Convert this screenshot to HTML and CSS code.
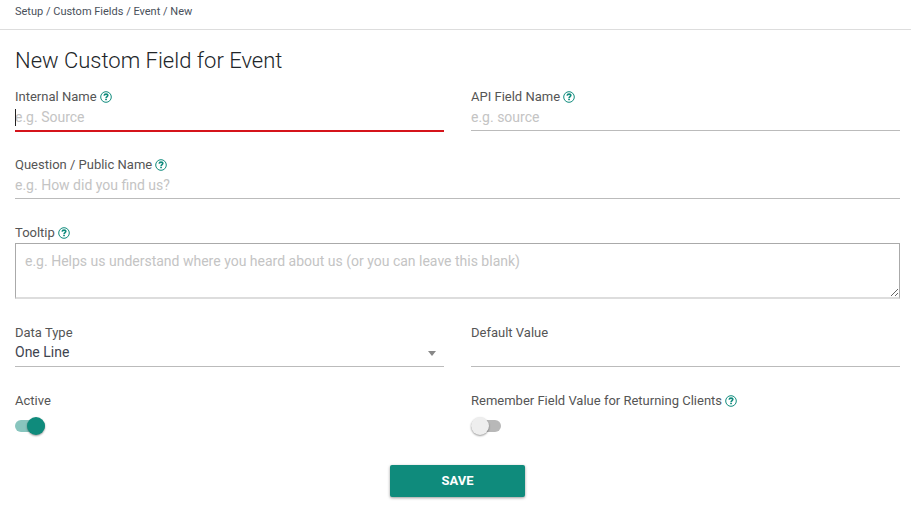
FILE: index.html
```html
<!DOCTYPE html>
<html lang="en">
<head>
  <meta charset="UTF-8">
  <meta name="viewport" content="width=device-width, initial-scale=1.0">
  <title>New Custom Field for Event</title>
  <link rel="stylesheet" href="styles.css">
</head>
<body>
  <!-- Help icon shared by the labels -->
  <svg class="sprite" aria-hidden="true">
    <symbol id="help" viewBox="0 0 12 12">
      <circle cx="6" cy="6" r="5.300" fill="none" stroke="currentColor" stroke-width="1"/>
      <path d="M4.100 4.700C4.300 3.600 5 3.100 6 3.100c1.100 0 1.800.6 1.800 1.500C7.800 5.600 6.100 5.700 6.100 7" fill="none" stroke="currentColor" stroke-width="1.600"/>
      <rect x="5.200" y="7.700" width="1.700" height="1.500" fill="currentColor"/>
    </symbol>
  </svg>

  <nav class="breadcrumb" aria-label="Breadcrumb">
    <a href="#">Setup</a> / <a href="#">Custom Fields</a> / <a href="#">Event</a> / <span>New</span>
  </nav>

  <main class="content">
    <h1>New Custom Field for Event</h1>

    <form class="field-form">
      <div class="field">
        <label for="internalName">Internal Name <svg class="help"><use href="#help"/></svg></label>
        <div class="control focused">
          <input type="text" id="internalName" placeholder="e.g. Source">
        </div>
      </div>
      <div class="field">
        <label for="apiName">API Field Name <svg class="help"><use href="#help"/></svg></label>
        <div class="control">
          <input type="text" id="apiName" placeholder="e.g. source">
        </div>
      </div>

      <div class="field wide">
        <label for="publicName">Question / Public Name <svg class="help"><use href="#help"/></svg></label>
        <div class="control">
          <input type="text" id="publicName" placeholder="e.g. How did you find us?">
        </div>
      </div>

      <div class="field wide">
        <label for="tooltip">Tooltip <svg class="help"><use href="#help"/></svg></label>
        <textarea id="tooltip" placeholder="e.g. Helps us understand where you heard about us (or you can leave this blank)"></textarea>
      </div>

      <div class="field">
        <label for="dataType">Data Type</label>
        <div class="control dropdown">
          <select id="dataType">
            <option>One Line</option>
            <option>Multiple Lines</option>
            <option>Date</option>
          </select>
        </div>
      </div>
      <div class="field">
        <label for="defaultValue">Default Value</label>
        <div class="control">
          <input type="text" id="defaultValue">
        </div>
      </div>

      <div class="field">
        <label for="active">Active</label>
        <input type="checkbox" class="switch" id="active" checked>
      </div>
      <div class="field">
        <label for="remember">Remember Field Value for Returning Clients <svg class="help"><use href="#help"/></svg></label>
        <input type="checkbox" class="switch" id="remember">
      </div>

      <button type="submit" class="save">SAVE</button>
    </form>
  </main>
</body>
</html>
```
FILE: styles.css
```css
* {
  box-sizing: border-box;
}
body {
  margin: 0;
  font-family: Roboto, Arial, sans-serif;
  background: #fff;
  color: #212529;
}
.sprite {
  display: none;
}
.breadcrumb {
  height: 30px;
  padding: 4px 15px;
  border-bottom: 1px solid #ddd;
  font-size: 11px;
  line-height: 16px;
  color: #49505a;
}
.breadcrumb a {
  color: inherit;
  text-decoration: none;
}
.content {
  padding: 16px 11px 15px 15px;
}
h1 {
  margin: 0 0 12px;
  font-size: 22px;
  font-weight: 300;
  line-height: 30px;
}
.field-form {
  display: grid;
  grid-template-columns: 1fr 1fr;
  gap: 25px 27px;
}
.wide {
  grid-column: 1 / -1;
}
label {
  display: flex;
  align-items: center;
  gap: 3px;
  font-size: 13px;
  line-height: 17px;
  color: #555;
}
.help {
  width: 12px;
  height: 12px;
  color: #0f8b7c;
}

/* Text boxes and drop-down */
.control {
  display: flex;
  height: 26px;
  border-bottom: 1px solid #bbb;
}
.control input,
.control select {
  flex: 1;
  min-width: 0;
  padding: 0 0 2px;
  border: 0;
  outline: 0;
  background: none;
  font-family: inherit;
  font-size: 14px;
  font-weight: 450;
  color: #3e444f;
}
.focused {
  position: relative;
  height: 27px;
  margin-bottom: -1px;
  border-bottom: 2px solid #d5141b;
}
.focused::before {
  content: "";
  position: absolute;
  top: 4px;
  left: 0;
  width: 1px;
  height: 17px;
  background: #222;
}
::placeholder {
  color: #c4c4c4;
  opacity: 1;
}
.control select {
  appearance: none;
  padding-bottom: 3px;
}
.dropdown {
  align-items: center;
  padding-right: 8px;
}
.dropdown::after {
  content: "";
  border: 4px solid transparent;
  border-top: 5px solid #888;
  border-bottom: 0;
}
textarea {
  display: block;
  width: 100%;
  height: 56px;
  margin-top: 2px;
  padding: 8px 9px;
  border: 1px solid #aaa;
  border-bottom: 2px solid #ddd;
  outline: 0;
  resize: vertical;
  font-family: inherit;
  font-size: 14px;
  font-weight: 450;
  line-height: 18px;
}

/* Toggle switches */
.switch {
  appearance: none;
  position: relative;
  display: block;
  width: 30px;
  height: 18px;
  margin: 8px 0 5px;
  cursor: pointer;
}
.switch::before,
.switch::after {
  content: "";
  position: absolute;
}
.switch::before {
  inset: 3px 0;
  border-radius: 6px;
  background: #b8b8b8;
}
.switch::after {
  top: 0;
  left: 0;
  width: 18px;
  height: 18px;
  border-radius: 50%;
  background: #eee;
  box-shadow: 0 1px 2px rgba(0, 0, 0, 0.4);
}
.switch:checked::before {
  background: #88c5be;
}
.switch:checked::after {
  left: auto;
  right: 0;
  background: #0f8b7c;
}

.save {
  grid-column: 1 / -1;
  justify-self: center;
  width: 135px;
  height: 32px;
  padding: 0 0 2px;
  border: 0;
  border-radius: 2px;
  background: #0f8b7c;
  box-shadow: 0 1px 3px rgba(0, 0, 0, 0.4);
  color: #fff;
  font-family: inherit;
  font-size: 13px;
  font-weight: 700;
  cursor: pointer;
}

@media (max-width: 600px) {
  .field-form {
    grid-template-columns: 1fr;
  }
}
```
